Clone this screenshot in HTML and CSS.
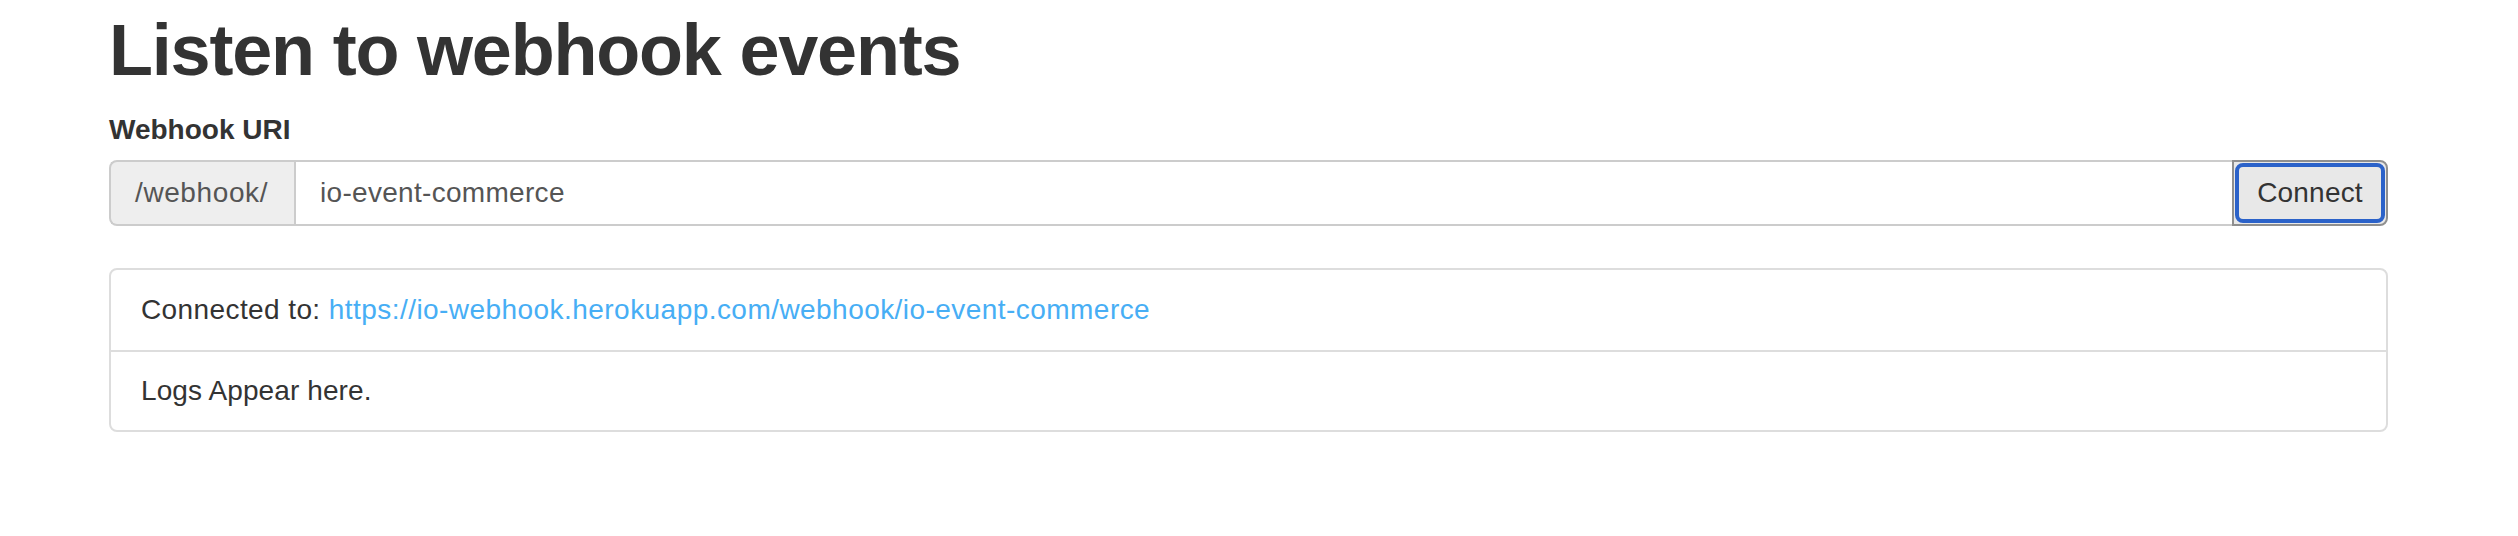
FILE: index.html
```html
<!DOCTYPE html>
<html>
<head>
<meta charset="utf-8">
<title>Listen to webhook events</title>
<link rel="stylesheet" href="styles.css">
</head>
<body>
<div class="container">
  <h1 class="title">Listen to webhook events</h1>
  <label class="field-label" for="uri">Webhook URI</label>
  <div class="input-group">
    <span class="addon">/webhook/</span>
    <input id="uri" class="uri-input" type="text" value="io-event-commerce">
    <button class="btn" type="button">Connect</button>
  </div>
  <div class="list">
    <div class="list-item list-item-first">Connected to: <a class="link" href="#">https://io-webhook.herokuapp.com/webhook/io-event-commerce</a></div>
    <div class="list-item list-item-last">Logs Appear here.</div>
  </div>
</div>
</body>
</html>
```

FILE: styles.css
```css
html, body {
  margin: 0;
  padding: 0;
  background: #fff;
}

body {
  font-family: "Liberation Sans", Arial, Helvetica, sans-serif;
  font-size: 28px;
  line-height: 40px;
  color: #333;
}

.container {
  width: 2279px;
  margin-left: 109px;
  padding-top: 11px;
}

.title {
  margin: 0 0 20px;
  font-size: 72px;
  line-height: 79px;
  font-weight: bold;
  letter-spacing: -1.2px;
  color: #333;
}

.field-label {
  display: block;
  font-weight: bold;
  font-size: 28px;
  line-height: 40px;
  margin-bottom: 10px;
}

.input-group {
  display: flex;
  height: 66px;
  margin-bottom: 42px;
}

.addon {
  display: flex;
  align-items: center;
  box-sizing: border-box;
  padding: 0 26px 0 24px;
  background: #eee;
  color: #555;
  letter-spacing: 0.6px;
  border: 2px solid #ccc;
  border-right: 0;
  border-radius: 8px 0 0 8px;
}

.uri-input {
  flex: 1;
  min-width: 0;
  box-sizing: border-box;
  height: 66px;
  margin: 0;
  padding: 0 24px;
  border: 2px solid #ccc;
  border-right: 0;
  border-radius: 0;
  font-family: "Liberation Sans", Arial, Helvetica, sans-serif;
  font-size: 28px;
  letter-spacing: 0.3px;
  color: #555;
  background: #fff;
  outline: none;
}

.btn {
  position: relative;
  box-sizing: border-box;
  width: 156px;
  height: 66px;
  margin: 0;
  padding: 0;
  border: 2px solid #8f8f8f;
  border-radius: 0 8px 8px 0;
  background: #e8e8e8;
  font-family: "Liberation Sans", Arial, Helvetica, sans-serif;
  font-size: 28px;
  letter-spacing: 0.2px;
  color: #333;
}

.btn::after {
  content: "";
  position: absolute;
  top: 1px;
  left: 1px;
  right: 1px;
  bottom: 1px;
  border: 4px solid #2b62c9;
  border-radius: 8px;
}

.list {
  border: 2px solid #ddd;
  border-radius: 8px;
}

.list-item {
  padding: 20px 30px;
}

.list-item-first {
  letter-spacing: 0.4px;
}

.list-item-last {
  border-top: 2px solid #ddd;
  padding: 19px 30px;
  letter-spacing: 0.1px;
}

.link {
  color: #47aef5;
  text-decoration: none;
  letter-spacing: 0.45px;
}
```
